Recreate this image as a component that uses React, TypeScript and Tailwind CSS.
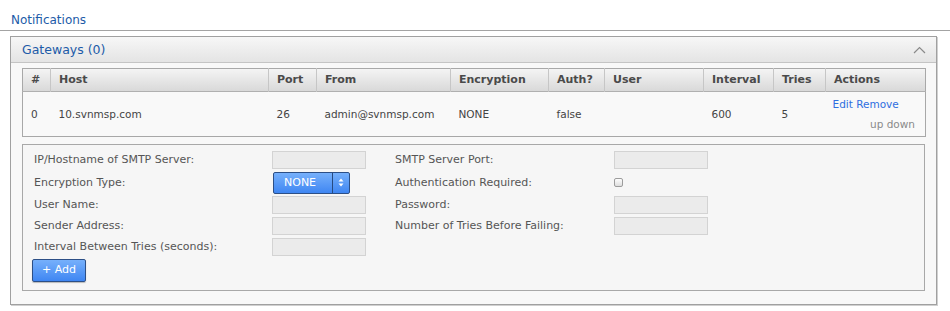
import React from 'react';

const columns = [
  { label: '#', width: 28 },
  { label: 'Host', width: 218 },
  { label: 'Port', width: 48 },
  { label: 'From', width: 134 },
  { label: 'Encryption', width: 98 },
  { label: 'Auth?', width: 56 },
  { label: 'User', width: 99 },
  { label: 'Interval', width: 70 },
  { label: 'Tries', width: 52 },
  { label: 'Actions', width: 100 },
];

const row = ['0', '10.svnmsp.com', '26', 'admin@svnmsp.com', 'NONE', 'false', '', '600', '5'];

function TextBox() {
  return <div className="w-[94px] h-[18px] bg-[#ebebeb] border border-[#d3d3d3]" />;
}

function Label({ children, w }: { children: React.ReactNode; w: string }) {
  return <div className={`${w} text-[11px] text-[#555] leading-[18px]`}>{children}</div>;
}

export default function App() {
  return (
    <div
      className="w-[950px] h-[311px] bg-white overflow-hidden"
      style={{ fontFamily: '"DejaVu Sans", Verdana, sans-serif' }}
    >
      {/* title */}
      <div className="h-[31px] border-b border-[#a3a3a3] pl-[11px] pt-[12px] text-[12px] leading-[16px] text-[#1d5ba8]">
        Notifications
      </div>

      {/* gateways panel */}
      <div className="ml-[10px] mt-[5px] w-[927px] border border-[#a0a0a0] bg-[#f8f8f8] shadow-[1px_1px_0_#d0d0d0]">
        <div className="h-[26px] flex items-center justify-between pl-[11px] pr-[10px] border-b border-[#c4c4c4] bg-gradient-to-b from-[#f7f7f7] to-[#e4e4e4]">
          <span className="text-[12.5px] text-[#1d5ba8] mt-[2px]">Gateways (0)</span>
          <svg width="13" height="8" viewBox="0 0 13 8" className="mt-[1px]">
            <polyline points="1,7 6.5,1.5 12,7" fill="none" stroke="#8a8a8a" strokeWidth="1.2" />
          </svg>
        </div>

        <div className="pl-[11px] pr-[11px] pt-[5px] pb-[13px]">
          {/* gateway table */}
          <table className="table-fixed border-collapse w-[903px] border border-[#a8a8a8] bg-[#f9f9f9]">
            <colgroup>
              {columns.map((c) => (
                <col key={c.label} style={{ width: c.width }} />
              ))}
            </colgroup>
            <thead>
              <tr className="h-[23px] bg-gradient-to-b from-[#f4f4f4] to-[#d9d9d9] border-b border-[#b0b0b0]">
                {columns.map((c, i) => (
                  <th
                    key={c.label}
                    className={`text-left font-bold text-[11px] text-[#4a4a4a] px-[8px] pt-[1px] pb-0 ${
                      i < columns.length - 1 ? 'border-r border-[#c6c6c6]' : ''
                    }`}
                  >
                    {c.label}
                  </th>
                ))}
              </tr>
            </thead>
            <tbody>
              <tr className="h-[45px]">
                {row.map((v, i) => (
                  <td key={i} className="px-[8px] pt-[1px] text-[10.5px] text-[#444] align-middle">
                    {v}
                  </td>
                ))}
                <td className="pl-[7px] pr-[10px] align-top pt-[5px] text-[10.5px]">
                  <div className="text-[#2f6fe0] leading-[14px]">Edit Remove</div>
                  <div className="text-right text-[#8a8a8a] leading-[14px] mt-[6px]">up down</div>
                </td>
              </tr>
            </tbody>
          </table>

          {/* add form */}
          <div className="mt-[7px] w-[903px] h-[147px] border border-[#a8a8a8] bg-[#f6f6f6] pl-[11px] pt-[6px]">
            <div className="flex">
              <div className="flex flex-col gap-[3px]">
                <div className="flex items-center">
                  <Label w="w-[238px]">IP/Hostname of SMTP Server:</Label>
                  <TextBox />
                </div>
                <div className="flex items-center h-[22px] -my-[0.5px]">
                  <Label w="w-[239px]">Encryption Type:</Label>
                  <div className="flex h-[22px] w-[77px] border border-[#2c4f86] rounded-[2px] bg-gradient-to-b from-[#76b0fb] to-[#3f86f2] text-white">
                    <div className="flex-1 flex items-center pl-[10px] pt-[1px] text-[11px]">NONE</div>
                    <div className="w-[17px] border-l border-[#274a80] flex items-center justify-center">
                      <svg width="6" height="9" viewBox="0 0 6 9">
                        <polygon points="3,0.5 5.5,3.5 0.5,3.5" fill="white" />
                        <polygon points="0.5,5.5 5.5,5.5 3,8.5" fill="white" />
                      </svg>
                    </div>
                  </div>
                </div>
                <div className="flex items-center">
                  <Label w="w-[238px]">User Name:</Label>
                  <TextBox />
                </div>
                <div className="flex items-center">
                  <Label w="w-[238px]">Sender Address:</Label>
                  <TextBox />
                </div>
                <div className="flex items-center">
                  <Label w="w-[238px]">Interval Between Tries (seconds):</Label>
                  <TextBox />
                </div>
                <button className="-ml-[2px] w-[54px] h-[23px] border border-[#2c4f86] rounded-[2px] bg-gradient-to-b from-[#76b0fb] to-[#3f86f2] text-white text-[11px] shadow-[0_1px_1px_rgba(0,0,0,0.25)]">
                  + Add
                </button>
              </div>

              <div className="flex flex-col gap-[3px] ml-[29px]">
                <div className="flex items-center">
                  <Label w="w-[219px]">SMTP Server Port:</Label>
                  <TextBox />
                </div>
                <div className="flex items-center h-[22px] -my-[0.5px]">
                  <Label w="w-[219px]">Authentication Required:</Label>
                  <div className="w-[9px] h-[9px] rounded-[2px] border border-[#9c9c9c] bg-gradient-to-b from-[#fdfdfd] to-[#dedede]" />
                </div>
                <div className="flex items-center">
                  <Label w="w-[219px]">Password:</Label>
                  <TextBox />
                </div>
                <div className="flex items-center">
                  <Label w="w-[219px]">Number of Tries Before Failing:</Label>
                  <TextBox />
                </div>
              </div>
            </div>
          </div>
        </div>
      </div>
    </div>
  );
}
